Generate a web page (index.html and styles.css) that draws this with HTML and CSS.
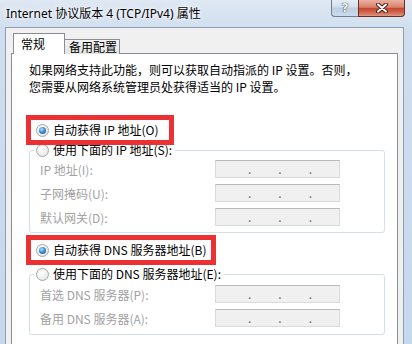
FILE: index.html
```html
<!DOCTYPE html>
<html lang="zh-CN">
<head>
  <meta charset="UTF-8">
  <title>Internet 协议版本 4 (TCP/IPv4) 属性</title>
  <link rel="stylesheet" href="styles.css">
</head>
<body>
  <div class="window">
    <div class="titlebar">
      <span class="title">Internet 协议版本 4 (TCP/IPv4) 属性</span>
      <div class="caption-buttons">
        <span class="btn-help">?</span>
        <span class="btn-close">
          <svg width="12" height="10" viewBox="0 0 12 10">
            <path d="M2 1.5 L10 8.5 M10 1.5 L2 8.5" stroke="#4b2019" stroke-width="4" stroke-linecap="round"/>
            <path d="M2 1.5 L10 8.5 M10 1.5 L2 8.5" stroke="#fff" stroke-width="2" stroke-linecap="round"/>
          </svg>
        </span>
      </div>
    </div>

    <div class="client">
      <div class="tabs">
        <span class="tab active">常规</span>
        <span class="tab">备用配置</span>
      </div>

      <div class="panel">
        <p class="desc">如果网络支持此功能，则可以获取自动指派的 IP 设置。否则，<br>您需要从网络系统管理员处获得适当的 IP 设置。</p>

        <!-- IP address -->
        <label class="option mark mark-ip"><input type="radio" name="ip" checked> 自动获得 IP 地址(O)</label>
        <fieldset class="group">
          <legend class="option"><input type="radio" name="ip"> 使用下面的 IP 地址(S):</legend>
          <div class="field-row"><span class="field-label">IP 地址(I):</span><div class="ip"><span>.</span><span>.</span><span>.</span></div></div>
          <div class="field-row"><span class="field-label">子网掩码(U):</span><div class="ip"><span>.</span><span>.</span><span>.</span></div></div>
          <div class="field-row"><span class="field-label">默认网关(D):</span><div class="ip"><span>.</span><span>.</span><span>.</span></div></div>
        </fieldset>

        <!-- DNS -->
        <label class="option mark mark-dns"><input type="radio" name="dns" checked> 自动获得 DNS 服务器地址(B)</label>
        <fieldset class="group group-dns">
          <legend class="option"><input type="radio" name="dns"> 使用下面的 DNS 服务器地址(E):</legend>
          <div class="field-row"><span class="field-label">首选 DNS 服务器(P):</span><div class="ip"><span>.</span><span>.</span><span>.</span></div></div>
          <div class="field-row"><span class="field-label">备用 DNS 服务器(A):</span><div class="ip"><span>.</span><span>.</span><span>.</span></div></div>
        </fieldset>
      </div>
    </div>
  </div>
</body>
</html>
```

FILE: styles.css
```css
/* General */
body {
  margin: 0;
  width: 412px;
  height: 344px;
  overflow: hidden;
  font-family: "Noto Sans CJK SC", sans-serif;
  font-size: 12px;
  color: #000;
}

.window {
  display: flex;
  flex-direction: column;
  height: 344px;
  background: linear-gradient(to bottom, #dfe8f3 0, #d0deee 30px, #c6d8ed 100%);
}

/* Title bar */
.titlebar {
  display: flex;
  align-items: flex-start;
  height: 27px;
  flex-shrink: 0;
}

.title {
  padding-left: 6px;
  line-height: 27px;
  font-family: "Noto Sans", "Noto Sans CJK SC", sans-serif;
  font-size: 12px;
  text-shadow: 0 0 6px #fff, 0 0 3px #fff;
}

.caption-buttons {
  display: flex;
  margin-left: auto;
  margin-right: 7px;
}

.btn-help,
.btn-close {
  display: flex;
  align-items: center;
  justify-content: center;
  height: 17px;
  box-sizing: border-box;
}

.btn-help {
  width: 27px;
  border: 1px solid #6f7e92;
  border-top: none;
  border-right: none;
  border-radius: 0 0 0 4px;
  background: linear-gradient(to bottom, #e6edf5, #d2deeb 45%, #bccee2 50%, #cddcec);
  color: #f6f8fb;
  font-family: "DejaVu Sans", sans-serif;
  font-weight: bold;
  font-size: 12px;
  text-shadow: 0 0 1px #2c3440, 0 0 1px #2c3440;
}

.btn-close {
  width: 47px;
  border: 1px solid #6a3026;
  border-top: none;
  border-radius: 0 0 4px 0;
  background: linear-gradient(to bottom, #eab0a2, #d9836d 45%, #c4462d 52%, #cf6a50 80%, #e09a84);
}

/* Client area */
.client {
  flex: 1;
  display: flex;
  flex-direction: column;
  margin: 0 8px 0 5px;
  padding: 6px 5px 0 5px;
  background: #f0f0f0;
  border: 1px solid #8d9db2;
  border-bottom: none;
}

.tabs {
  display: flex;
  align-items: flex-end;
  height: 20px;
  padding-left: 2px;
  margin-bottom: -1px;
  position: relative;
  z-index: 1;
}

.tab {
  height: 14px;
  line-height: 14px;
  padding: 0 2px 0 4px;
  border: 1px solid #898c95;
  border-left: none;
  border-bottom: none;
  background: linear-gradient(to bottom, #f4f4f4, #e4e4e4);
}

.tab.active {
  height: 20px;
  line-height: 19px;
  width: 43px;
  padding: 0 0 0 7px;
  border-left: 1px solid #898c95;
  background: #fff;
}

.panel {
  flex: 1;
  padding: 7px 12px 0 17px;
  background: #fff;
  border: 1px solid #898c95;
  border-bottom: none;
}

.desc {
  margin: 0;
  line-height: 17px;
}

/* Radio options */
.option {
  display: flex;
  align-items: center;
  gap: 4px;
  height: 20px;
  line-height: 20px;
  white-space: nowrap;
}

label.option {
  margin-left: 2px;
  padding-left: 5px;
  box-sizing: border-box;
}

.option input {
  appearance: none;
  margin: 0;
  width: 13px;
  height: 13px;
  border-radius: 50%;
  border: 1px solid #a4a6a8;
  background: radial-gradient(circle at 40% 35%, #fff 0, #eceded 60%, #d8d9da 100%);
  box-sizing: border-box;
  display: grid;
  place-items: center;
}

.option input:checked::after {
  content: "";
  width: 7px;
  height: 7px;
  border-radius: 50%;
  background: radial-gradient(circle at 40% 35%, #b8e2ff 0, #3d8fd8 45%, #154d96 100%);
}

.mark {
  outline: 5px solid #ec3134;
}

.mark-ip {
  width: 138px;
  margin-top: 25px;
}

.mark-dns {
  width: 180px;
  margin-top: 7px;
}

/* Group boxes */
.group {
  margin: 0;
  min-width: 0;
  padding: 0 0 6px 10px;
  border: 1px solid #d5dfe5;
  border-radius: 3px;
}

.group legend {
  margin-left: -6px;
  padding: 0 3px 0 2px;
}

.group-dns {
  margin-top: 4px;
  padding-top: 1px;
  padding-bottom: 7px;
}

.field-row {
  display: flex;
  align-items: center;
  height: 18px;
}

.field-row + .field-row {
  margin-top: 6px;
}

.field-label {
  width: 175px;
  color: #a2a2a2;
  white-space: nowrap;
}

.ip {
  display: flex;
  width: 125px;
  height: 18px;
  box-sizing: border-box;
  padding-left: 32px;
  border: 1px solid #dadada;
  border-top-color: #b9b9b9;
  background: #f0f0f0;
  color: #6a6a6a;
  line-height: 15px;
}

.ip span {
  width: 31px;
}
```
